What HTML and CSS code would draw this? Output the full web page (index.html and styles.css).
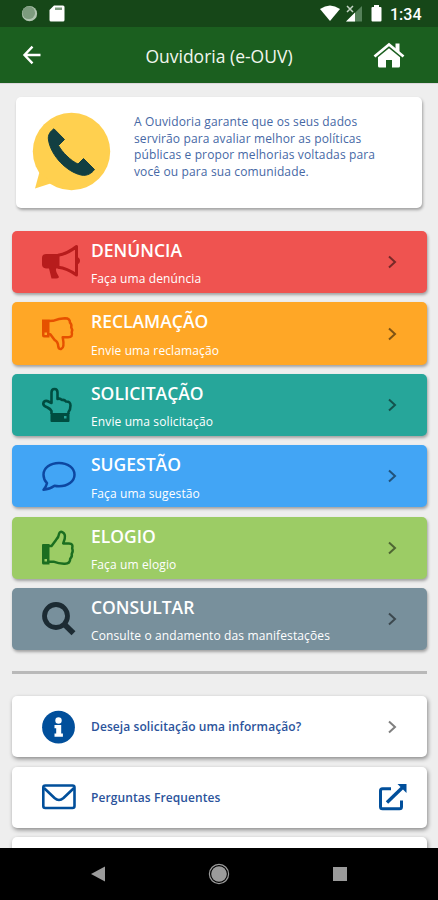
FILE: index.html
```html
<!DOCTYPE html>
<html lang="pt-BR">
<head>
<meta charset="utf-8">
<meta name="viewport" content="width=device-width">
<title>Ouvidoria (e-OUV)</title>
<link rel="stylesheet" href="styles.css">
</head>
<body>
<div class="screen">
  <div class="status">
    <svg class="status-left" viewBox="0 0 50 20"><circle cx="8.500" cy="9.700" r="7.600" fill="#b0c4b0"/><circle cx="7.700" cy="8.700" r="6.400" fill="#7d9b7e"/><path d="M33 1.500h9a1.500 1.500 0 0 1 1.500 1.500v13a1.500 1.500 0 0 1-1.500 1.500H30a1.500 1.500 0 0 1-1.500-1.500V6z" fill="#fff"/><path d="M34 3.500h7v2.500h-7z" fill="#7d9b7e"/></svg>
    <div class="status-right">
      <svg class="status-icons" viewBox="0 0 64 20"><path d="M0 5Q10 -2 20 5L10 17z" fill="#fff"/><path d="M26 17.500L42 2v15.500z" fill="#55815a"/><path d="M26 17.500l9-9v9z" fill="#fff"/><path d="M27 2l6 6M33 2l-6 6" stroke="#c4d3c4" stroke-width="1.500"/><path d="M54 1h5v2h1.500a1 1 0 0 1 1 1v12.500a1 1 0 0 1-1 1h-8a1 1 0 0 1-1-1V4a1 1 0 0 1 1-1H54z" fill="#fff"/></svg>
      <span class="clock">1:34</span>
    </div>
  </div>
  <header class="bar">
    <svg class="back" viewBox="0 0 20 20"><path d="M18.500 10H3M10.500 1.700L2.500 10l8 8.300" fill="none" stroke="#fff" stroke-width="2.400"/></svg>
    <h1>Ouvidoria (e-OUV)</h1>
    <svg class="home" viewBox="0 0 32 26"><path d="M1.500 14.500L16 2.500l14.500 12" fill="none" stroke="#fff" stroke-width="2.800"/><path d="M22.500 1.500h4v9l-4-3.500zM5 15.300L16 6.200l11 9.100V24q0 1.500-1.500 1.500H19V18h-6v7.500H6.500Q5 25.500 5 24z" fill="#fff"/></svg>
  </header>
  <main>
    <section class="card intro">
      <svg class="phone" viewBox="0 0 80 80"><circle cx="39.500" cy="39.500" r="38.700" fill="#ffd04f"/><path d="M7.500 60L3 76.500 20 71z" fill="#ffd04f"/><path d="M22 16.800C18.500 19 15.500 23 16.500 28C19 44 35 60 49 63C55 64.500 60 61 62.500 57.500L51.500 46.500L46 52C39 49 30 40 26.500 33.500L32.500 27.500Z" fill="#123f42" stroke="#123f42" stroke-linejoin="round"/></svg>
      <p>A Ouvidoria garante que os seus dados<br>servirão para avaliar melhor as políticas<br>públicas e propor melhorias voltadas para<br>você ou para sua comunidade.</p>
    </section>
    <nav class="menu">
      <a class="card row red">
        <svg class="icon" viewBox="0 0 38 36"><path d="M4 10h13.500v14.500H14q-.5 3 2.500 7.500l.5 1.200q-1 1.300-3 1.300H9.500L7 24.500H4q-4-.5-4-4V14q0-4 4-4z" fill="#b71c1c"/><path d="M16 11.300q9-1.300 18.500-8.800v28.500Q25 24 16 23.200" fill="none" stroke="#b71c1c" stroke-width="3" stroke-linejoin="round"/><path d="M35 13q3 1 3 3.700T35 20.500z" fill="#b71c1c"/></svg>
        <div class="text"><h2>DENÚNCIA</h2><p>Faça uma denúncia</p></div>
        <svg class="chev" viewBox="0 0 10 14"><path d="M2 1.500l6 5.500-6 5.500"/></svg>
      </a>
      <a class="card row orange">
        <svg class="icon" viewBox="0 0 38 36"><path fill-rule="evenodd" d="M0 3.500h7.500v18H2q-2 0-2-2zM2.500 16.500v2.500h2.500v-2.500z" fill="#e65100"/><path d="M7 5l4-.2q6-2.300 12-2.600 5 0 5 4.500 2 2 1.200 4.500 1.700 2.500.5 5 1.500 5-3.500 5h-5.500q2 10-1.200 11.500-2.700.8-3.200-2-.3-5-3.500-6.500l-4.500-6H7" fill="none" stroke="#e65100" stroke-width="2.500" stroke-linejoin="round"/></svg>
        <div class="text"><h2>RECLAMAÇÃO</h2><p>Envie uma reclamação</p></div>
        <svg class="chev" viewBox="0 0 10 14"><path d="M2 1.500l6 5.500-6 5.500"/></svg>
      </a>
      <a class="card row teal">
        <svg class="icon" viewBox="0 0 38 36"><path d="M9.500 27v-3q-1-2-4-3.500Q1 19 1.300 16.500q.5-3 4-2.500l4.200 2V5.500q0-3.500 3-3.500t3 3.500V12q2.500-1 4.300 1 2.500-.7 4.200 1.500 4.500-.2 4.500 4 0 4-2 6.500v2" fill="none" stroke="#004d40" stroke-width="2.600" stroke-linejoin="round"/><path fill-rule="evenodd" d="M10 26h16q1.500 0 1.500 1.500V34q0 1-1 1H9.500q-1 0-1-1v-6.500Q8.500 26 10 26zM22 29v2.500h2.500V29z" fill="#004d40"/></svg>
        <div class="text"><h2>SOLICITAÇÃO</h2><p>Envie uma solicitação</p></div>
        <svg class="chev" viewBox="0 0 10 14"><path d="M2 1.500l6 5.500-6 5.500"/></svg>
      </a>
      <a class="card row blue">
        <svg class="icon" viewBox="0 0 38 36"><path d="M17 5c8.700 0 15.500 5 15.500 11.700S25.700 28.300 17 28.300q-2.500 0-4.500-.5Q7.500 31.500 1.500 31.800 4 29 5 25.200q-3.500-3.700-3.500-8.500C1.500 10 8.300 5 17 5z" fill="none" stroke="#0d47a1" stroke-width="2.500" stroke-linejoin="round"/></svg>
        <div class="text"><h2>SUGESTÃO</h2><p>Faça uma sugestão</p></div>
        <svg class="chev" viewBox="0 0 10 14"><path d="M2 1.500l6 5.500-6 5.500"/></svg>
      </a>
      <a class="card row green">
        <svg class="icon" viewBox="0 0 38 36"><path fill-rule="evenodd" d="M1 14h6.500v20.500H1.500Q0 34.500 0 33V15q0-1 1-1zM2.500 29v2.500H5V29z" fill="#1b6e20"/><path d="M7 15.300h2.500l4.500-6q2.700-2.500 3.200-6.500 1-2.500 3.500-1 3 1.500 2 6.500l-1.500 4.500H27q4.500 0 3.200 5 1.200 3-.5 5.500.7 3-1.500 4.800 0 5-5.200 5-6 .2-11.500-2H7" transform="translate(0 .6)" fill="none" stroke="#1b6e20" stroke-width="2.500" stroke-linejoin="round"/></svg>
        <div class="text"><h2>ELOGIO</h2><p>Faça um elogio</p></div>
        <svg class="chev" viewBox="0 0 10 14"><path d="M2 1.500l6 5.500-6 5.500"/></svg>
      </a>
      <a class="card row gray">
        <svg class="icon" viewBox="0 0 38 36"><circle cx="14" cy="15" r="11.500" fill="none" stroke="#1c2b33" stroke-width="4.800"/><path d="M21.500 22.500l10 9.700" stroke="#1c2b33" stroke-width="5.600"/></svg>
        <div class="text"><h2>CONSULTAR</h2><p>Consulte o andamento das manifestações</p></div>
        <svg class="chev" viewBox="0 0 10 14"><path d="M2 1.500l6 5.500-6 5.500"/></svg>
      </a>
    </nav>
    <hr>
    <nav class="menu links">
      <a class="card row">
        <svg class="icon" viewBox="0 0 38 36"><circle cx="16.500" cy="18.200" r="16.400" fill="#014f9b"/><circle cx="16.500" cy="11.500" r="3.200" fill="#fff"/><path d="M12.500 16h6.700v8.500h1.700v3.200h-8.400v-3.200h1.700V19.200h-1.700z" fill="#fff"/></svg>
        <span class="label">Deseja solicitação uma informação?</span>
        <svg class="chev" viewBox="0 0 10 14"><path d="M2 1.500l6 5.500-6 5.500"/></svg>
      </a>
      <a class="card row">
        <svg class="icon" viewBox="0 0 38 36"><rect x="1.300" y="6.500" width="31.200" height="22.500" rx="2" fill="none" stroke="#014f9b" stroke-width="2.600"/><path d="M2 9L12.500 19q4.500 4 9 0L32 9" fill="none" stroke="#014f9b" stroke-width="2.600"/></svg>
        <span class="label">Perguntas Frequentes</span>
        <svg class="external" viewBox="0 0 30 28"><path d="M13 5.800H4.500Q2.500 5.800 2.500 7.800v16q0 2 2 2h17q2 0 2-2V17.500" fill="none" stroke="#014f9b" stroke-width="3"/><path d="M9 19.500L24.500 4.500" stroke="#014f9b" stroke-width="3.400"/><path d="M19.500 1H28.500v9z" fill="#014f9b"/></svg>
      </a>
      <a class="card row"></a>
    </nav>
  </main>
  <footer>
    <svg viewBox="0 0 14 16"><path d="M0 8L14 .5v15z" fill="#9b9b9b"/></svg>
    <svg class="circle" viewBox="0 0 22 22"><circle cx="11" cy="11" r="9.600" fill="none" stroke="#9b9b9b" stroke-width="1.200"/><circle cx="11" cy="11" r="7.800" fill="#9b9b9b"/></svg>
    <svg viewBox="0 0 14 16"><path d="M0 1h14v14H0z" fill="#9b9b9b"/></svg>
  </footer>
</div>
</body>
</html>
```
FILE: styles.css
```css
* { box-sizing: border-box; margin: 0; padding: 0; }
body { font-family: "Open Sans", "Noto Sans", sans-serif; background: #eee; }
svg { display: block; flex: none; }
.screen { width: 438px; height: 900px; display: flex; flex-direction: column; overflow: hidden; }
.status { flex: none; height: 27px; background: #164718; display: flex; justify-content: space-between; padding: 4px 16px 0 21px; }
.status-left { width: 50px; height: 20px; }
.status-right { display: flex; gap: 6px; }
.status-icons { width: 64px; height: 20px; }
.clock { font: 500 16px/21px Roboto, sans-serif; color: #fff; width: 32px; white-space: nowrap; }
.bar { flex: none; height: 56px; background: #1b5f1f; display: flex; align-items: center; padding: 0 33px 0 22px; }
.back { width: 20px; height: 20px; }
.home { width: 32px; height: 26px; }
.bar h1 { flex: 1; text-align: center; font-size: 17.500px; font-weight: 400; line-height: 24px; color: #f1f6ee; padding: 2px 0 0 23px; }
main { flex: 1; min-height: 0; overflow: hidden; padding: 14px 11px 0 12px; border-top: 1px solid #ddd7dd; }
.card { background: #fff; border-radius: 5px; box-shadow: 1px 2px 3px rgba(0, 0, 0, .32); }
.intro { height: 110.500px; width: 406px; margin: -1px 0 0 4px; display: flex; padding: 15px 0 0 16px; }
.phone { width: 80px; height: 80px; }
.intro p { font-size: 12px; line-height: 16.600px; letter-spacing: .13px; color: #4668a5; margin-left: 22px; white-space: nowrap; padding-top: 2px; }
.menu { display: flex; flex-direction: column; gap: 9.100px; margin-top: 23.500px; }
.row { height: 62.300px; flex: none; display: flex; align-items: center; padding: 0 30px; }
.icon { width: 38px; height: 36px; }
.text { flex: 1; margin-left: 11px; align-self: flex-start; color: #fff; white-space: nowrap; }
.text h2 { font-size: 17.500px; font-weight: 600; line-height: 24px; margin-top: 7px; }
.text p { font-size: 12px; line-height: 18px; letter-spacing: .12px; margin-top: 8.400px; }
.chev { width: 10px; height: 14px; }
.chev path { fill: none; stroke: #000; stroke-opacity: .5; stroke-width: 2; }
.red { background: #ef5350; }
.orange { background: #ffa726; }
.teal { background: #26a69a; }
.blue { background: #42a5f5; }
.green { background: #9ccc65; }
.gray { background: #78909c; }
hr { border: 0; height: 3px; background: #b9b9b9; margin-top: 21px; }
.links { margin-top: 22px; gap: 9.500px; }
.links .card { box-shadow: 1px 2px 4px rgba(0, 0, 0, .42); }
.links .row { height: 61px; }
.label { flex: 1; margin-left: 11px; font-size: 12px; font-weight: 600; letter-spacing: .09px; color: #2b539b; white-space: nowrap; }
.external { width: 30px; height: 28px; margin-right: -11px; }
footer { flex: none; height: 52.500px; background: #000; display: flex; align-items: center; justify-content: space-between; padding: 0 91px 0 91px; }
footer svg { width: 14px; height: 16px; }
footer .circle { width: 22px; height: 22px; }
```
